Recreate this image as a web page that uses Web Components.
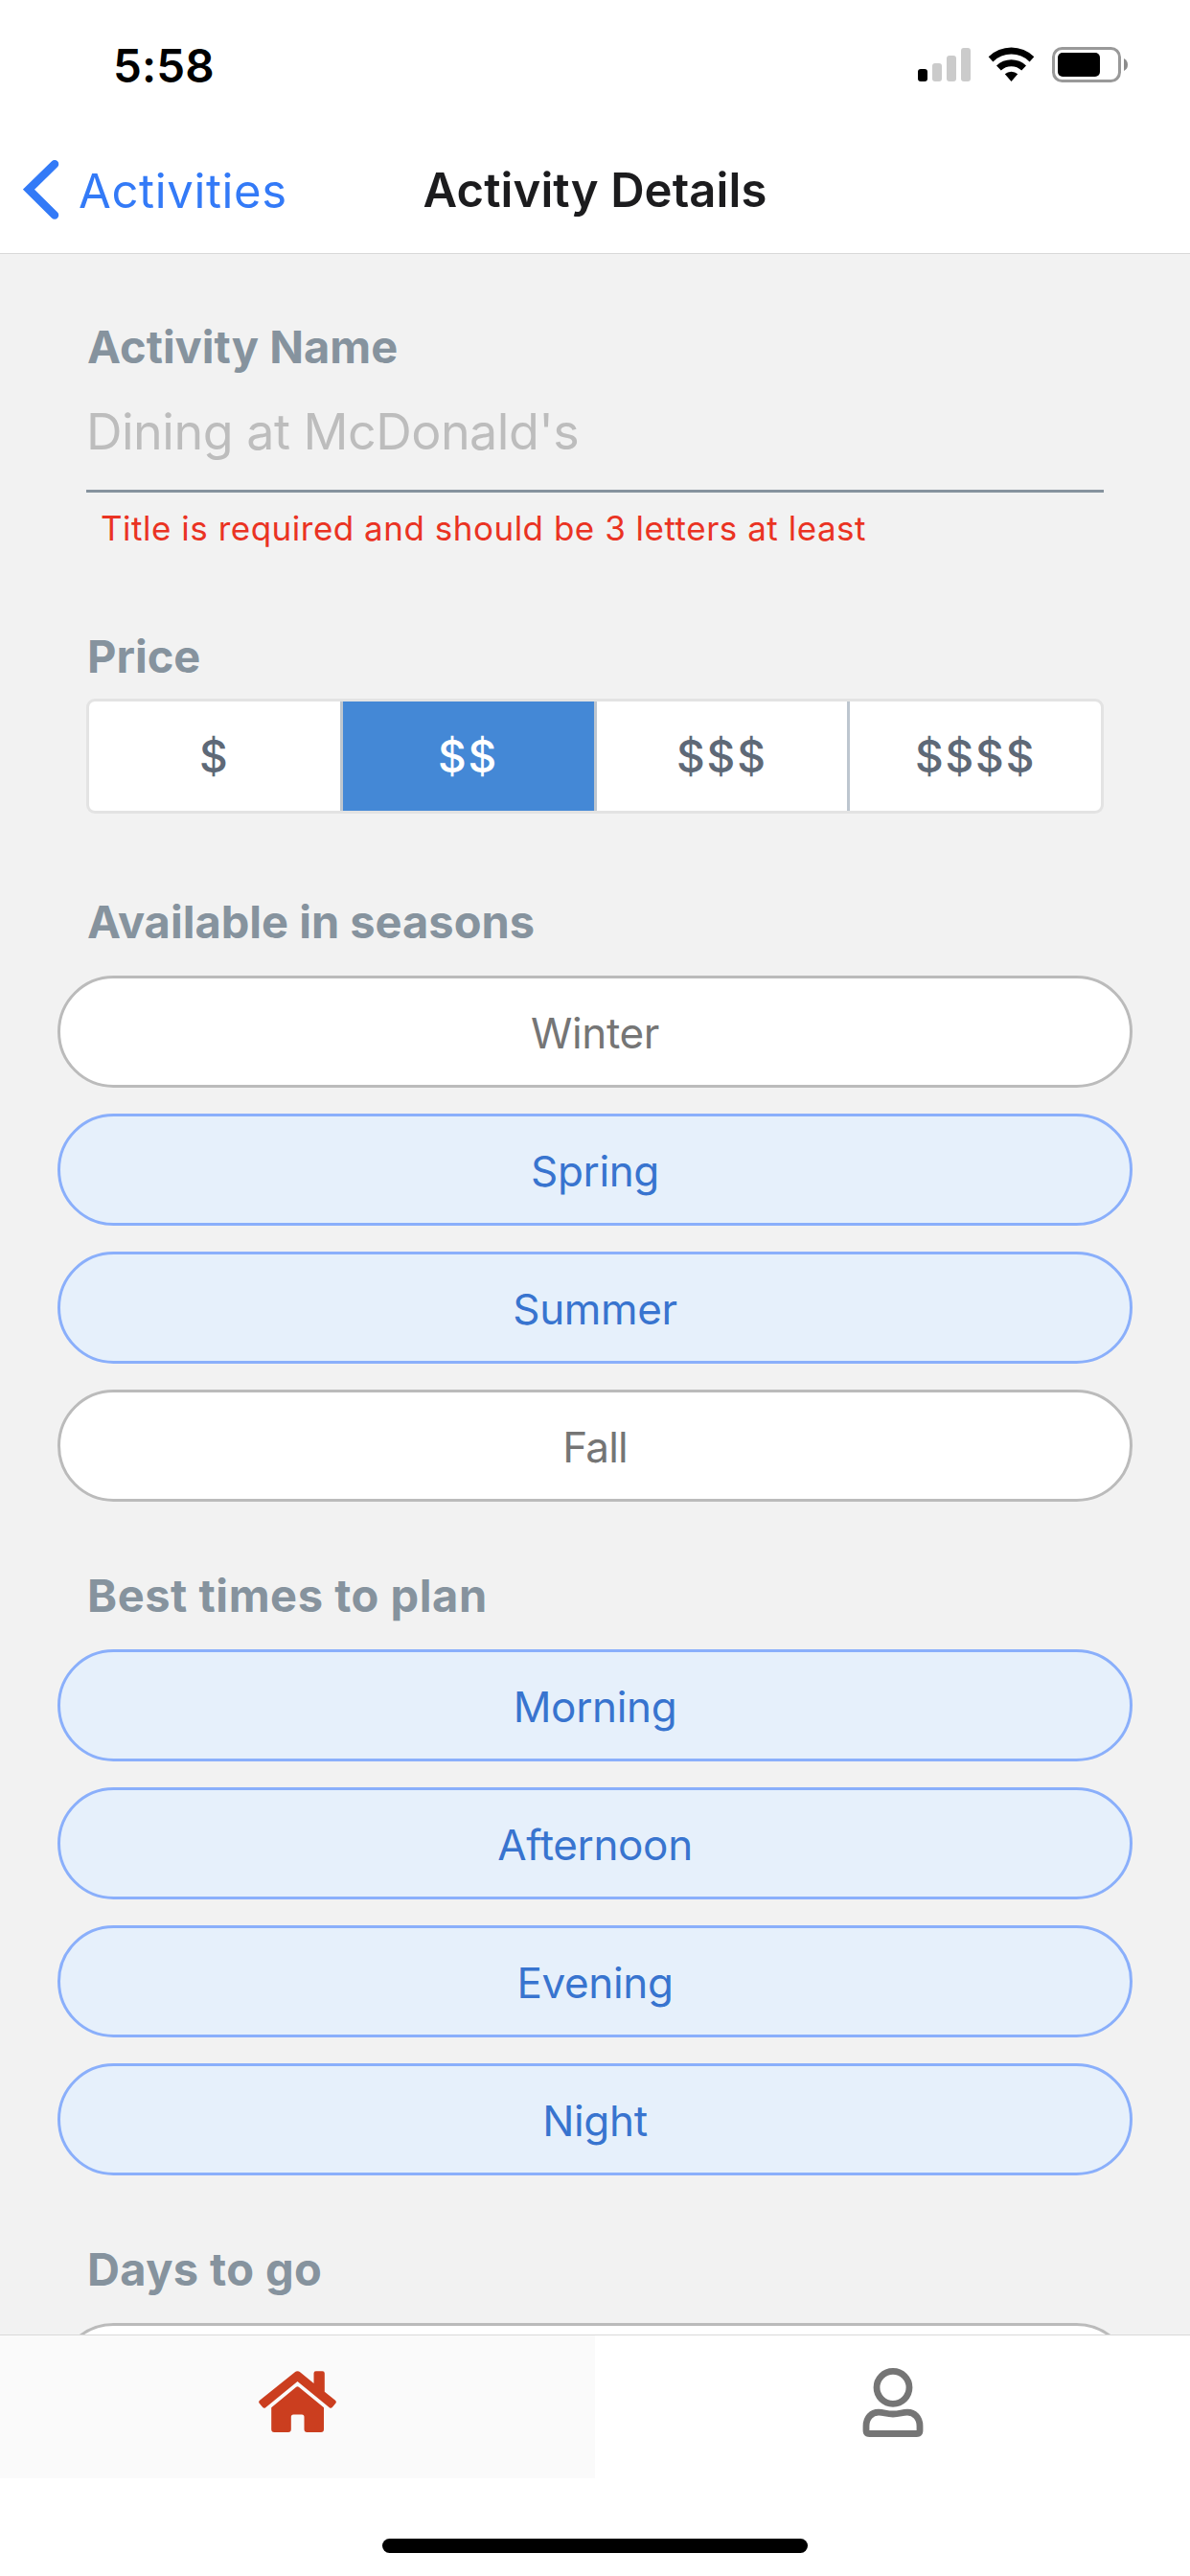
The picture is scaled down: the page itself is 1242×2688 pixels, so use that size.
<!DOCTYPE html>
<html lang="en">
<head>
<meta charset="utf-8">
<title>Activity Details</title>
<style>
html,body{margin:0;padding:0;width:1242px;height:2688px;overflow:hidden;background:#fff;font-family:Inter,"Liberation Sans",sans-serif}
</style>
</head>
<body>
<activity-screen></activity-screen>
<script>
const define = (name, html) => customElements.define(name, class extends HTMLElement {
  connectedCallback() {
    if (!this.shadowRoot) this.attachShadow({ mode: 'open' }).innerHTML = html;
  }
});

define('status-bar', `
<style>
:host{display:flex;align-items:center;justify-content:space-between;height:132px;box-sizing:border-box;padding:4px 64px 0 118px;color:#000}
time{font-size:47.5px;font-weight:600;letter-spacing:.1px}
svg{display:block;width:221px;height:40px;margin-top:-1px}
</style>
<time>5:58</time>
<svg viewBox="957 48 221 40">
  <rect x="958" y="72" width="10" height="13" rx="3"/>
  <g fill="#cbcbcb"><rect x="973" y="66" width="10" height="19" rx="3"/><rect x="988" y="58" width="10" height="27" rx="3"/><rect x="1003" y="50" width="10" height="35" rx="3"/></g>
  <path d="M1031.7 59.3A34 34 0 0 1 1079.3 59.3L1074.6 64.4A27.2 27.2 0 0 0 1036.4 64.4Z"/>
  <path d="M1040 68.5A22.2 22.2 0 0 1 1071 68.5L1066.2 73.6A15.4 15.4 0 0 0 1044.8 73.6Z"/>
  <path d="M1048.8 77.3A10.2 10.2 0 0 1 1062.2 77.3L1055.5 85Z"/>
  <rect x="1099.5" y="50.5" width="69" height="34" rx="9" fill="none" stroke="#999" stroke-width="3"/>
  <rect x="1104" y="55" width="44" height="25" rx="5"/>
  <path d="M1173 61Q1177 63 1177 67.5Q1177 72 1173 74Z" fill="#8c8c8c"/>
</svg>`);

define('nav-bar', `
<style>
:host{display:grid;grid-template-columns:1fr auto 1fr;align-items:center;height:133px;box-sizing:border-box;border-bottom:1px solid #d9d9d9;font-size:49px}
.back{display:flex;align-items:center;color:#337af7;padding-left:24px}
svg{display:block;width:38px;height:62px;flex:none}
.t{margin-left:20px;letter-spacing:.63px;padding-top:3px}
h1{margin:0;font-size:49px;font-weight:600;color:#1c1c1e;letter-spacing:.1px}
</style>
<div class="back"><svg viewBox="24 167 38 62"><path d="M57 171.3L30 197.7L57 224.5" fill="none" stroke="#337af7" stroke-width="8.5" stroke-linecap="round" stroke-linejoin="miter"/></svg><span class="t"><slot name="back"></slot></span></div>
<h1><slot></slot></h1>`);

define('field-label', `
<style>:host{display:block;height:60px;line-height:60px;font-size:47px;font-weight:700;color:#86939e;padding-left:91px;white-space:nowrap}</style><slot></slot>`);

define('text-field', `
<style>
:host{display:block;margin:0 90px}
.v{height:119px;line-height:117px;font-size:52px;color:#bdbdbd;border-bottom:3px solid #86939e;letter-spacing:-.5px}
.e{margin:12px 0 0 15px;height:50px;line-height:50px;font-size:35px;color:#ea3323;letter-spacing:.51px}
</style>
<div class="v"><slot></slot></div><div class="e"><slot name="error"></slot></div>`);

define('price-group', `
<style>:host{display:flex;margin:14px 90px 0;height:120px;box-sizing:border-box;border:3px solid #e3e3e3;border-radius:9px;background:#fff;overflow:hidden}</style><slot></slot>`);
define('price-option', `
<style>
:host{flex:1 1 0;display:flex;align-items:center;justify-content:center;border-right:3px solid #bdc6cf;color:#5e6977;font-size:46px;font-weight:500;letter-spacing:1.8px}
:host(:last-child){border-right:0}
:host([selected]){background:#4488d6;color:#fff}
</style><slot></slot>`);

define('chip-list', `<style>:host{display:flex;flex-direction:column;gap:27px;margin:26px 60px 0}</style><slot></slot>`);
define('choice-chip', `
<style>
:host{display:block;text-align:center;box-sizing:border-box;height:117px;line-height:114px;border:3px solid #bbb;border-radius:59px;background:#fff;color:#757575;font-size:44px;letter-spacing:var(--track,-.35px)}
:host([selected]){background:#e6f0fb;border-color:#8aaffb;color:#3874cf}
</style><slot></slot>`);

define('tab-bar', `
<style>
:host{display:block;height:252px;box-sizing:border-box;border-top:1px solid #d9d9d9;background:#fff}
.tabs{display:flex;height:149px}
.tab{flex:1;display:flex;justify-content:center}
.on{background:#fafafa}
.home{width:81px;height:65px;margin-top:37px}
.user{width:64px;height:73px;margin-top:33px}
.bar{width:444px;height:15px;border-radius:8px;background:#000;margin:63px auto 0}
</style>
<div class="tabs">
<div class="tab on"><svg class="home" viewBox="0 0 81 65" fill="#cb3e1f">
<path d="M37.5 1.5Q40.5-.8 43.5 1.5L57.5 13V2.5Q57.5.3 59.7.3H66.5Q68.8.3 68.8 2.5V21.8L80 30.8Q81.5 32.2 80.3 33.8L76.8 38Q75.4 39.5 73.8 38.2L40.5 11L7.2 38.2Q5.6 39.5 4.2 38L.7 33.8Q-.5 32.2 1 30.8Z"/>
<path d="M39.2 16.8Q40.5 15.8 41.8 16.8L68 38.3V61Q68 64 65 64H50.5Q47.5 64 47.5 61V48Q47.5 45.5 45 45.5H36.3Q33.8 45.5 33.8 48V61Q33.8 64 30.8 64H16.2Q13.2 64 13.2 61V38.3Z"/></svg></div>
<div class="tab"><svg class="user" viewBox="0 0 64 73" fill="none" stroke="#757575" stroke-width="6.8">
<circle cx="32" cy="21.3" r="17"/>
<path d="M4 61.5C4 53 9.5 47.2 17 47.2C22.5 47.2 25 49 32 49C39 49 41.5 47.2 47 47.2C54.5 47.2 60 53 60 61.5V66Q60 69.5 56.5 69.5H7.5Q4 69.5 4 66Z"/></svg></div>
</div>
<div class="bar"></div>`);

define('activity-screen', `
<style>
:host{display:flex;flex-direction:column;width:1242px;height:2688px;overflow:hidden}
main{flex:1;min-height:0;overflow:hidden;background:#f2f2f2;padding-top:67px;display:flex;flex-direction:column}
main>*{flex:none}
.price{margin-top:79px}
.seasons{margin-top:83px}
.next{margin-top:68px}
.times{letter-spacing:.56px}
.days{letter-spacing:.38px}
.fall{--track:-.9px}
</style>
<status-bar></status-bar>
<nav-bar><span slot="back">Activities</span>Activity Details</nav-bar>
<main>
<field-label>Activity Name</field-label>
<text-field>Dining at McDonald's<span slot="error">Title is required and should be 3 letters at least</span></text-field>
<field-label class="price">Price</field-label>
<price-group><price-option>$</price-option><price-option selected>$$</price-option><price-option>$$$</price-option><price-option>$$$$</price-option></price-group>
<field-label class="seasons">Available in seasons</field-label>
<chip-list><choice-chip>Winter</choice-chip><choice-chip selected>Spring</choice-chip><choice-chip selected>Summer</choice-chip><choice-chip class="fall">Fall</choice-chip></chip-list>
<field-label class="next times">Best times to plan</field-label>
<chip-list><choice-chip selected>Morning</choice-chip><choice-chip selected>Afternoon</choice-chip><choice-chip selected>Evening</choice-chip><choice-chip selected>Night</choice-chip></chip-list>
<field-label class="next days">Days to go</field-label>
<chip-list><choice-chip></choice-chip></chip-list>
</main>
<tab-bar></tab-bar>`);
</script>
</body>
</html>
